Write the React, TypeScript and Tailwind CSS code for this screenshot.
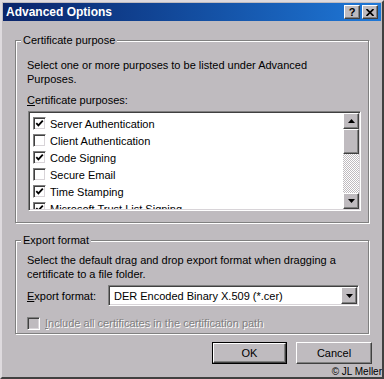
import React from "react";

const face = "bg-[#bfbbbf]";
const raised =
  "border border-t-white border-l-white border-r-[#404040] border-b-[#404040] shadow-[inset_-1px_-1px_0_#808080]";
const sunken =
  "border border-t-[#808080] border-l-[#808080] border-r-white border-b-white shadow-[inset_1px_1px_0_#404040,inset_-1px_-1px_0_#d8d4d8]";
const etched = "border border-[#808080] shadow-[inset_1px_1px_0_#fff,1px_1px_0_#fff]";

const CheckBox = ({ checked = false, disabled = false }: { checked?: boolean; disabled?: boolean }) => (
  <span
    className={`flex h-[13px] w-[13px] shrink-0 items-center justify-center ${sunken} ${
      disabled ? face : "bg-white"
    }`}
  >
    {checked && (
      <svg width="9" height="9" viewBox="0 0 9 9">
        <path d="M1.3 4.2 L3.4 6.4 L7.8 1.6" fill="none" stroke="#000" strokeWidth="1.8" />
      </svg>
    )}
  </span>
);

const Arrow = ({ down = false }: { down?: boolean }) => (
  <svg width="7" height="4" viewBox="0 0 7 4">
    <path d={down ? "M0 0 H7 L3.5 4 Z" : "M0 4 H7 L3.5 0 Z"} fill="#000" />
  </svg>
);

const purposes: [string, boolean][] = [
  ["Server Authentication", true],
  ["Client Authentication", false],
  ["Code Signing", true],
  ["Secure Email", false],
  ["Time Stamping", true],
  ["Microsoft Trust List Signing", true],
];

const GroupBox = ({ title, className, children }: { title: string; className: string; children: React.ReactNode }) => (
  <div className={`relative ${etched} ${className}`}>
    <span className={`absolute -top-[8px] left-[5px] px-[2px] leading-[14px] ${face}`}>{title}</span>
    {children}
  </div>
);

export default function App() {
  return (
    <div
      className={`relative h-[379px] w-[384px] overflow-hidden ${face} border-2 border-t-[#dedade] border-l-[#dedade] border-r-[#404040] border-b-[#404040] p-[1px] text-[11px] leading-[14px] text-black`}
      style={{ fontFamily: '"Liberation Sans", Arial, sans-serif' }}
    >
      {/* title bar */}
      <div className="flex h-[18px] items-center justify-between bg-linear-to-r from-[#0a246a] to-[#1f78d8] pl-[3px] pr-[3px]">
        <span className="text-[12px] font-bold text-white">Advanced Options</span>
        <div className="flex gap-[2px]">
          <span className={`flex h-[14px] w-[16px] items-center justify-center ${face} ${raised} text-[11px] font-bold leading-none`}>
            ?
          </span>
          <span className={`flex h-[14px] w-[16px] items-center justify-center ${face} ${raised}`}>
            <svg width="8" height="7" viewBox="0 0 8 7">
              <path d="M0.5 0 L7.5 7 M7.5 0 L0.5 7" stroke="#000" strokeWidth="1.7" />
            </svg>
          </span>
        </div>
      </div>

      <div className="px-[12px]">
        {/* Certificate purpose */}
        <GroupBox title="Certificate purpose" className="mt-[19px] pl-[11px] pt-[17px] pb-[11px]">
          <p>
            Select one or more purposes to be listed under Advanced
            <br />
            Purposes.
          </p>
          <p className="mt-[7px]">
            <span className="underline">C</span>ertificate purposes:
          </p>
          <div className={`mt-[4px] ml-[1px] flex h-[100px] w-[333px] bg-white ${sunken} p-[1px]`}>
            <div className="flex-1 overflow-hidden pt-[2px] pl-[3px]">
              {purposes.map(([name, on]) => (
                <div key={name} className="flex h-[17px] items-center gap-[4px] whitespace-nowrap">
                  <CheckBox checked={on} />
                  <span>{name}</span>
                </div>
              ))}
            </div>
            {/* scrollbar */}
            <div className="flex w-[16px] flex-col">
              <span className={`flex h-[16px] items-center justify-center ${face} ${raised}`}>
                <Arrow />
              </span>
              <span className={`h-[25px] ${face} ${raised}`} />
              <span className="flex-1 bg-[repeating-conic-gradient(#bfbbbf_0%_25%,#ffffff_0%_50%)] bg-[length:2px_2px]" />
              <span className={`flex h-[16px] items-center justify-center ${face} ${raised}`}>
                <Arrow down />
              </span>
            </div>
          </div>
        </GroupBox>

        {/* Export format */}
        <GroupBox title="Export format" className="mt-[17px] pl-[11px] pt-[12px] pb-[3px]">
          <p>
            Select the default drag and drop export format when dragging a
            <br />
            certificate to a file folder.
          </p>
          <div className="mt-[4px] flex h-[21px] items-center">
            <span className="w-[81px]">
              <span className="underline">E</span>xport format:
            </span>
            <div className={`flex h-[21px] w-[251px] items-center bg-white ${sunken} p-[1px]`}>
              <span className="flex-1 pl-[4px]">DER Encoded Binary X.509 (*.cer)</span>
              <span className={`flex h-[17px] w-[16px] items-center justify-center ${face} ${raised}`}>
                <Arrow down />
              </span>
            </div>
          </div>
          <div className="mt-[10px] flex h-[14px] items-center gap-[5px]">
            <CheckBox disabled />
            <span className="text-[#808080] [text-shadow:1px_1px_0_#fff]">
              <span className="underline">I</span>nclude all certificates in the certification path
            </span>
          </div>
        </GroupBox>
      </div>

      {/* buttons */}
      <div className="mt-[8px] flex justify-end gap-[9px] pr-[9px]">
        <button className={`h-[22px] w-[75px] border border-black ${face}`}>
          <span className={`flex h-full w-full items-center justify-center ${raised}`}>OK</span>
        </button>
        <button className={`flex h-[22px] w-[76px] items-center justify-center ${face} ${raised}`}>Cancel</button>
      </div>

      <span className={`absolute right-0 bottom-0 ${face} pl-[2px] text-[10px] leading-[11px]`}>© JL Meller</span>
    </div>
  );
}
